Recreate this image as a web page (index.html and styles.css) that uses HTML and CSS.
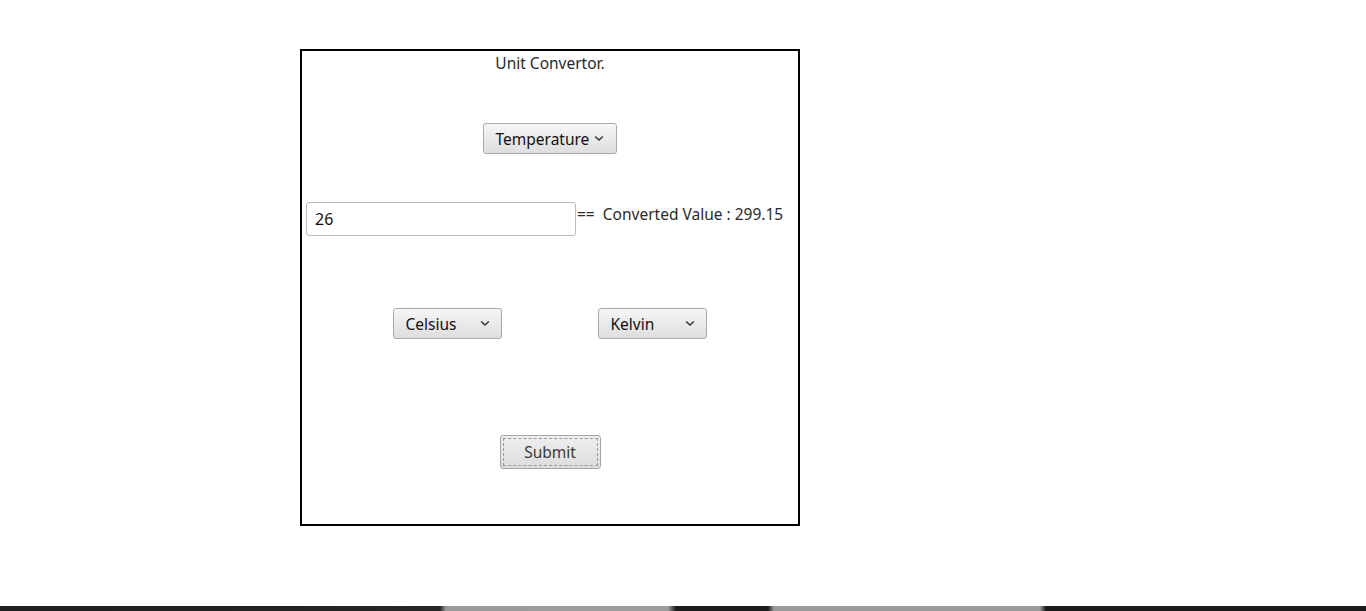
FILE: index.html
```html
<!DOCTYPE html>
<html>
<head>
<meta charset="utf-8">
<link rel="stylesheet" href="styles.css">
</head>
<body>
<div class="page">
  <div class="card">
    <div class="title">Unit Convertor.</div>
    <div class="row-center row-type">
      <div class="select sel-type"><span>Temperature</span><svg class="chev" width="10" height="7" viewBox="0 0 10 7"><path d="M1.2 1.5 L5 5 L8.8 1.5" fill="none" stroke="#333" stroke-width="1.5"/></svg></div>
    </div>
    <div class="row-input">
      <div class="input">26</div>
      <div class="result">==&nbsp;&nbsp;Converted Value : 299.15</div>
    </div>
    <div class="row-units">
      <div class="select sel-unit"><span>Celsius</span><svg class="chev" width="10" height="7" viewBox="0 0 10 7"><path d="M1.2 1.5 L5 5 L8.8 1.5" fill="none" stroke="#333" stroke-width="1.5"/></svg></div>
      <div class="select sel-unit"><span>Kelvin</span><svg class="chev" width="10" height="7" viewBox="0 0 10 7"><path d="M1.2 1.5 L5 5 L8.8 1.5" fill="none" stroke="#333" stroke-width="1.5"/></svg></div>
    </div>
    <div class="row-center row-submit">
      <div class="submit"><span class="submit-inner">Submit</span></div>
    </div>
  </div>
  <div class="spacer"></div>
  <div class="strip"></div>
</div>
</body>
</html>
```
FILE: styles.css
```css
html, body {
  margin: 0;
  padding: 0;
  background: #fff;
}
body {
  font-family: "Noto Sans", "Open Sans", sans-serif;
  font-size: 15.5px;
  color: #2a2a2a;
}
.page {
  width: 1366px;
  height: 611px;
  display: flex;
  flex-direction: column;
  overflow: hidden;
}
.card {
  margin: 49px 0 0 300px;
  width: 496px;
  height: 473px;
  border: 2px solid #000;
  display: flex;
  flex-direction: column;
}
.title {
  text-align: center;
  margin-top: 2px;
  height: 20px;
  line-height: 20px;
}
.row-center {
  display: flex;
  justify-content: center;
}
.row-type {
  margin-top: 50px;
}
.select {
  box-sizing: border-box;
  height: 31px;
  border: 1px solid #a9a9a9;
  border-radius: 3px;
  background: linear-gradient(#f6f6f6, #dedede);
  display: flex;
  align-items: center;
  color: #111;
  font-size: 15.5px;
}
.sel-type {
  width: 134px;
  padding-left: 12px;
  margin-right: 1px;
}
.sel-type .chev {
  margin-left: 5px;
}
.row-input {
  display: flex;
  align-items: flex-start;
  margin-top: 48px;
  padding-left: 4px;
}
.input {
  box-sizing: border-box;
  width: 270px;
  height: 34px;
  border: 1px solid #b9b9b9;
  border-radius: 3px;
  padding-left: 8px;
  line-height: 32px;
  color: #111;
  background: #fff;
  font-size: 16px;
}
.result {
  margin-left: 1px;
  margin-top: 2px;
  line-height: 20px;
  white-space: nowrap;
}
.row-units {
  display: flex;
  justify-content: center;
  gap: 96px;
  margin-top: 72px;
  padding-right: 1px;
}
.sel-unit {
  width: 109px;
  padding-left: 12px;
  justify-content: space-between;
  padding-right: 11px;
}
.row-submit {
  margin-top: 96px;
}
.submit {
  box-sizing: border-box;
  width: 101px;
  height: 34px;
  border: 1px solid #a6a6a6;
  border-radius: 3px;
  background: linear-gradient(#efefef, #dcdcdc);
  padding: 2px;
  display: flex;
}
.submit-inner {
  flex: 1;
  border: 1px dashed #9a9a9a;
  display: flex;
  align-items: center;
  justify-content: center;
  color: #3a3a3a;
  font-size: 15.5px;
}
.spacer {
  flex: 1;
}
.strip {
  height: 5px;
  background: linear-gradient(to right,
    #1e1e1e 0, #262626 440px, #9a9a9a 446px, #9d9d9d 668px,
    #1c1c1c 676px, #1c1c1c 768px, #9a9a9a 774px, #9a9a9a 1040px,
    #1b1b1b 1046px, #1b1b1b 1366px);
}
```
